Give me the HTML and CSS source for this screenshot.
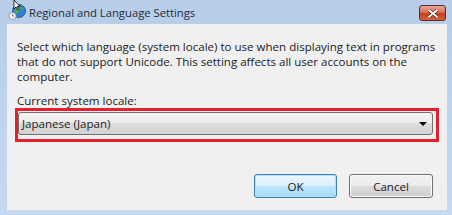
FILE: index.html
```html
<!DOCTYPE html>
<html>
<head>
  <title>Regional and Language Settings</title>
  <link rel="stylesheet" href="styles.css">
</head>
<body>
  <div class="window">
    <div class="title-bar">
      <svg class="app-icon" width="20" height="22" viewBox="0 0 20 22">
        <circle cx="11" cy="11" r="6.5" fill="#2f7fd0" stroke="#1b4f8a" stroke-width="0.8"/>
        <path d="M7 8 q3 -2 5 0 q1 2 -1 3 q-2 1 -1 3 q-2 0 -3 -2 z" fill="#4fae3a"/>
        <path d="M12 6 q3 1 4 4 q-2 0 -3 -1 z" fill="#4fae3a"/>
        <circle cx="4.5" cy="16" r="3.6" fill="#f4f4f4" stroke="#8a8a8a" stroke-width="0.8"/>
        <path d="M4.5 14 v2 h1.6" fill="none" stroke="#555" stroke-width="0.7"/>
        <path d="M6 0 v9 l2 -2 l1.5 3 l1.2 -0.6 l-1.5 -3 h2.8 z" fill="#fff" stroke="#000" stroke-width="0.8"/>
      </svg>
      <span class="title">Regional and Language Settings</span>
      <div class="close-btn">
        <svg width="12" height="9" viewBox="0 0 12 9">
          <path d="M1.5 0.8 L10.5 8.2 M10.5 0.8 L1.5 8.2" stroke="#5a2418" stroke-width="3.2"/>
          <path d="M1.5 0.8 L10.5 8.2 M10.5 0.8 L1.5 8.2" stroke="#fff" stroke-width="1.8"/>
        </svg>
      </div>
    </div>

    <div class="content">
      <p class="intro">Select which language (system locale) to use when displaying text in programs that do not support Unicode. This setting affects all user accounts on the computer.</p>
      <div class="label">Current system locale:</div>

      <div class="highlight">
        <div class="combo">
          <span class="combo-text">Japanese (Japan)</span>
          <span class="combo-arrow"></span>
        </div>
      </div>

      <div class="buttons">
        <button class="btn btn-default">OK</button>
        <button class="btn">Cancel</button>
      </div>
    </div>
  </div>
</body>
</html>
```

FILE: styles.css
```css
/* window frame */
body {
  margin: 0;
  font-family: "Open Sans", "Noto Sans", sans-serif;
  font-size: 11.55px;
  color: #1b1b1b;
}

.window {
  width: 452px;
  height: 215px;
  background: linear-gradient(to bottom, #b7cde8, #c6d9ef);
  display: flex;
  flex-direction: column;
}

.title-bar {
  height: 24px;
  display: flex;
  align-items: flex-start;
  position: relative;
}

.app-icon {
  margin-left: 8px;
  flex: none;
}

.title {
  margin-left: 1px;
  margin-top: 5px;
  font-size: 11.25px;
  color: #1e2b3c;
}

.close-btn {
  position: absolute;
  left: 419px;
  top: 5px;
  width: 25px;
  height: 14px;
  border: 1px solid #5e2b22;
  border-radius: 3px;
  background: linear-gradient(to bottom, #e9a99a 0%, #d86e5a 45%, #c6401f 55%, #d4623e 100%);
  display: flex;
  align-items: center;
  justify-content: center;
}

/* dialog body */
.content {
  flex: 1;
  margin: 0 5px 5px 7px;
  background: #f0f0f0;
  padding: 15px 8px 0 8px;
}

.intro {
  margin: 0 0 9px 2px;
  line-height: 15px;
}

.label {
  margin-left: 2px;
  line-height: 15px;
}

.highlight {
  border: 3px solid #e3202b;
  padding: 1px 3px 4px 0;
}

.combo {
  height: 21px;
  border: 1px solid #707070;
  border-radius: 3px;
  background: linear-gradient(to bottom, #f2f2f2 0%, #ebebeb 50%, #dddddd 50%, #d2d2d2 100%);
  display: flex;
  align-items: center;
  justify-content: space-between;
  padding: 0 5px 0 3px;
}

.combo-arrow {
  width: 0;
  height: 0;
  border-left: 4px solid transparent;
  border-right: 4px solid transparent;
  border-top: 4px solid #000;
}

.buttons {
  display: flex;
  justify-content: flex-end;
  gap: 12px;
  margin-top: 32px;
  padding-right: 6px;
}

.btn {
  width: 84px;
  height: 24px;
  border: 1px solid #707070;
  border-radius: 3px;
  background: linear-gradient(to bottom, #f2f2f2 0%, #ebebeb 50%, #dddddd 50%, #cfcfcf 100%);
  box-shadow: inset 0 0 0 1px #fbfbfb;
  font-family: "Open Sans", "Noto Sans", sans-serif;
  font-size: 11.55px;
  color: #1b1b1b;
  padding: 0;
}

.btn-default {
  width: 83px;
  border-color: #3c7fb1;
  background: linear-gradient(to bottom, #eaf6fd 0%, #d9f0fc 50%, #bee6fd 50%, #a7d9f5 100%);
  box-shadow: inset 0 0 0 1px #b5e0f6;
}
```
